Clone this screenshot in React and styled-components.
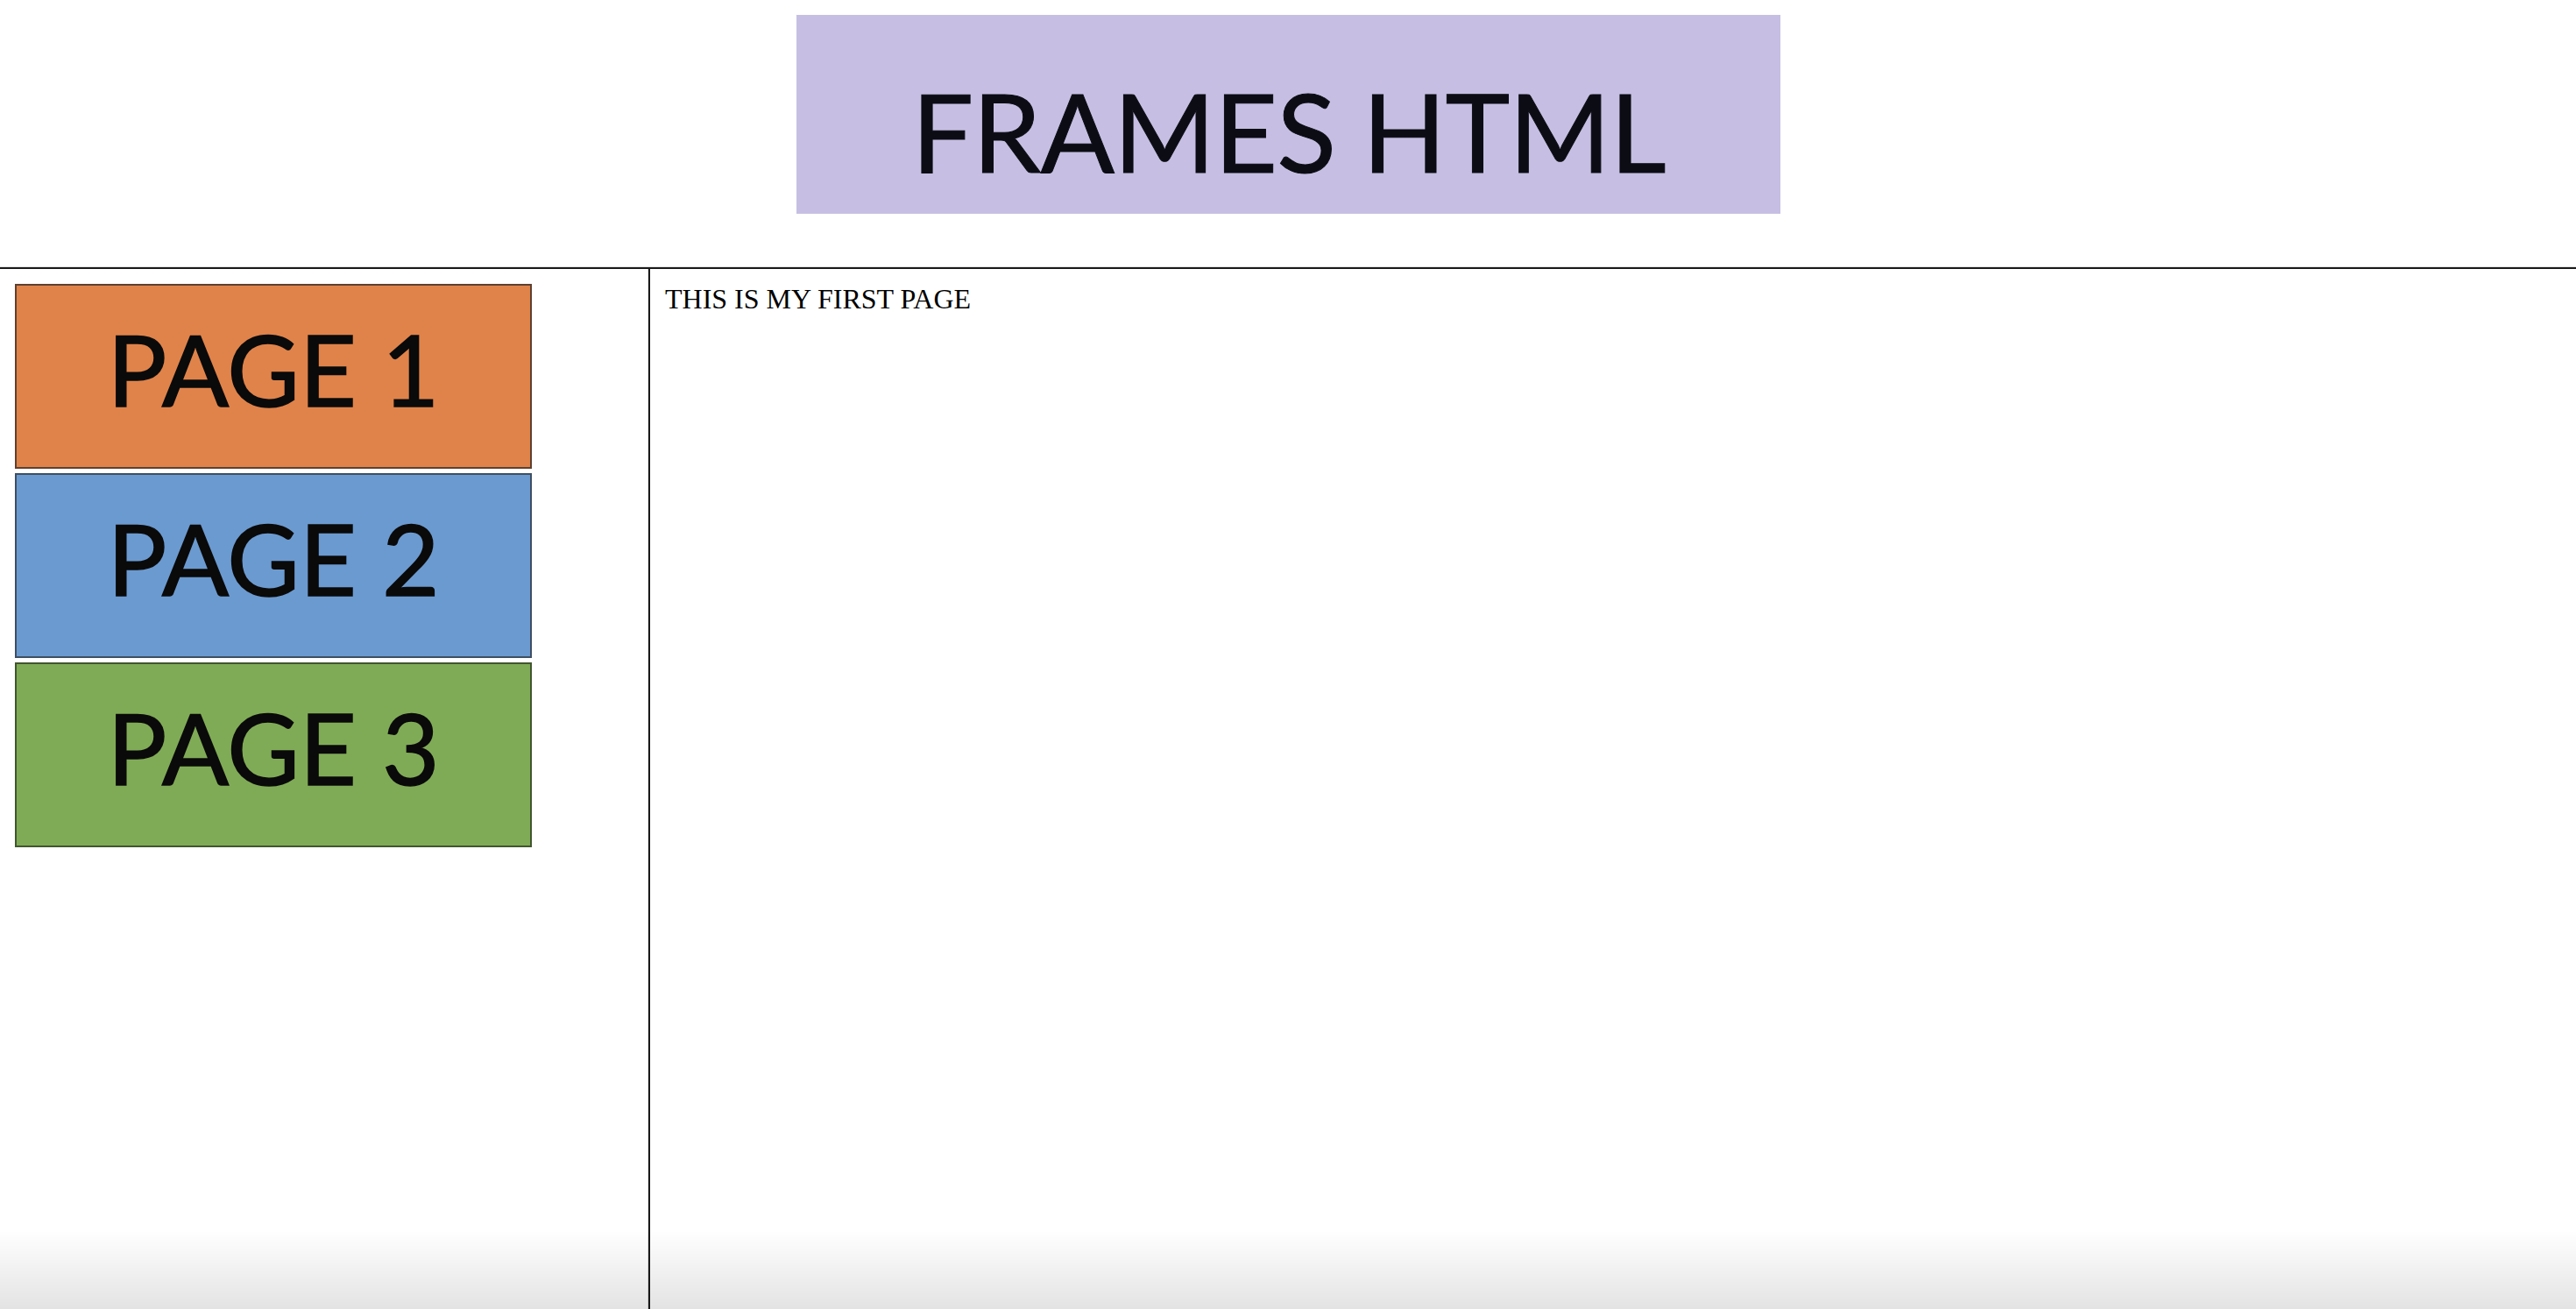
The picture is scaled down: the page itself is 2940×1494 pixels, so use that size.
import React from 'react';
import styled, { createGlobalStyle } from 'styled-components';

const GlobalStyle = createGlobalStyle`
  html, body {
    margin: 0;
    padding: 0;
    height: 100%;
    overflow: hidden;
    background: #ffffff;
  }
  #root {
    height: 100%;
  }
`;

const Window = styled.div`
  height: 100vh;
  display: flex;
  flex-direction: column;
  background: #ffffff;
`;

const TopFrame = styled.header`
  height: 305px;
  flex-shrink: 0;
  box-sizing: border-box;
  padding-top: 17px;
  display: flex;
  justify-content: center;
  border-bottom: 1px solid #e2e2e2;
`;

const Banner = styled.div`
  width: 1123px;
  height: 227px;
  margin-left: 1px;
  background: #c6bfe3;
  display: flex;
  align-items: center;
  justify-content: center;
  padding-top: 36px;
  box-sizing: border-box;
  font-family: Lato, "Open Sans", sans-serif;
  font-size: 125px;
  color: #0c0c14;
  letter-spacing: -1px;
  -webkit-text-stroke: 1px #0c0c14;
`;

const Split = styled.div`
  flex: 1;
  display: flex;
  border-top: 2px solid #1a1a1a;
  min-height: 0;
`;

const NavFrame = styled.nav`
  width: 740px;
  flex-shrink: 0;
  box-sizing: border-box;
  padding: 17px 0 0 17px;
  border-right: 1px solid #e2e2e2;
  display: flex;
  flex-direction: column;
  gap: 5px;
`;

const PageButton = styled.a`
  width: 590px;
  height: 211px;
  box-sizing: border-box;
  border: 2px solid ${(p) => p.$edge};
  background: ${(p) => p.$bg};
  display: flex;
  align-items: center;
  justify-content: center;
  padding-bottom: 20px;
  font-family: Lato, "Open Sans", sans-serif;
  font-size: 113px;
  color: #0a0a0a;
  -webkit-text-stroke: 1.5px #0a0a0a;
  text-decoration: none;
  cursor: pointer;
`;

const ContentFrame = styled.main`
  flex: 1;
  border-left: 2px solid #1a1a1a;
  padding: 16px 17px;
  font-family: "Liberation Serif", "Times New Roman", serif;
  font-size: 32px;
  color: #000000;
`;

const BottomShade = styled.div`
  position: fixed;
  left: 0;
  right: 0;
  bottom: 0;
  height: 90px;
  pointer-events: none;
  background: linear-gradient(to bottom, rgba(0, 0, 0, 0), rgba(0, 0, 0, 0.11));
`;

const pages = [
  { label: 'PAGE 1', bg: '#e0834a', edge: '#5e4030' },
  { label: 'PAGE 2', bg: '#6b9ad0', edge: '#3e4f63' },
  { label: 'PAGE 3', bg: '#80ab56', edge: '#41562f' },
];

export default function App() {
  return (
    <>
      <GlobalStyle />
      <Window>
        <TopFrame>
          <Banner>FRAMES HTML</Banner>
        </TopFrame>
        <Split>
          <NavFrame>
            {pages.map((p) => (
              <PageButton key={p.label} $bg={p.bg} $edge={p.edge}>
                {p.label}
              </PageButton>
            ))}
          </NavFrame>
          <ContentFrame>THIS IS MY FIRST PAGE</ContentFrame>
        </Split>
      </Window>
      <BottomShade />
    </>
  );
}
